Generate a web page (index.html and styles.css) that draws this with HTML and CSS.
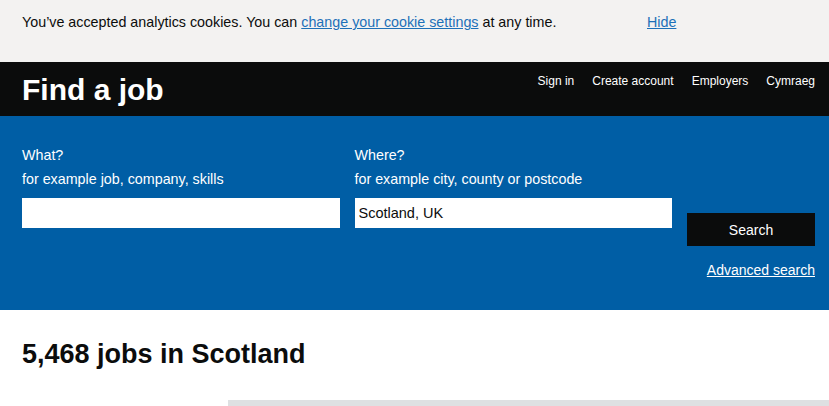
FILE: index.html
```html
<!DOCTYPE html>
<html lang="en">
<head>
  <meta charset="UTF-8" />
  <meta name="viewport" content="width=device-width, initial-scale=1.0" />
  <title>Find a job</title>
  <link rel="stylesheet" href="styles.css">
</head>
<body>
  <div class="cookie-banner">
    <p class="cookie-msg">You’ve accepted analytics cookies. You can <a href="#">change your cookie settings</a> at any time.</p>
    <a class="cookie-hide" href="#">Hide</a>
  </div>

  <header class="site-header">
    <a class="site-title" href="#">Find a job</a>
    <nav class="site-nav">
      <a href="#">Sign in</a>
      <a href="#">Create account</a>
      <a href="#">Employers</a>
      <a href="#">Cymraeg</a>
    </nav>
  </header>

  <form class="search-panel">
    <div class="field">
      <label class="field-label" for="what">What?</label>
      <span class="field-hint">for example job, company, skills</span>
      <input class="field-input" id="what" type="text" value="">
    </div>
    <div class="field">
      <label class="field-label" for="where">Where?</label>
      <span class="field-hint">for example city, county or postcode</span>
      <input class="field-input" id="where" type="text" value="Scotland, UK">
    </div>
    <div class="search-actions">
      <button class="search-btn" type="button">Search</button>
      <a class="advanced-link" href="#">Advanced search</a>
    </div>
  </form>

  <main class="results">
    <h1 class="results-title">5,468 jobs in Scotland</h1>
    <div class="results-body">
      <aside class="filters"></aside>
      <div class="results-list"></div>
    </div>
  </main>
</body>
</html>
```

FILE: styles.css
```css
body {
  margin: 0;
  font-family: "Liberation Sans", Arial, sans-serif;
  color: #0b0c0c;
  background: #fff;
  overflow: hidden;
}

a {
  color: #1d70b8;
}

/* cookie banner */
.cookie-banner {
  display: grid;
  grid-template-columns: 625px auto;
  align-items: start;
  height: 62px;
  box-sizing: border-box;
  padding: 12px 14px 0 22px;
  background: #f3f2f1;
  font-size: 14.3px;
  line-height: 20px;
}

.cookie-msg {
  margin: 0;
}

/* header */
.site-header {
  display: flex;
  justify-content: space-between;
  align-items: flex-start;
  height: 54px;
  box-sizing: border-box;
  padding: 0 14px 0 22px;
  background: #0b0c0c;
}

.site-title {
  color: #fff;
  text-decoration: none;
  font-weight: bold;
  font-size: 30px;
  line-height: 34px;
  margin-top: 11px;
}

.site-nav {
  display: flex;
  gap: 18px;
  margin-top: 11px;
}

.site-nav a {
  color: #fff;
  text-decoration: none;
  font-size: 12px;
  line-height: 16px;
}

/* search */
.search-panel {
  display: grid;
  grid-template-columns: 1fr 1fr 128px;
  gap: 15px;
  height: 194px;
  box-sizing: border-box;
  margin: 0;
  padding: 27px 14px 0 22px;
  background: #005ea5;
  color: #fff;
}

.field {
  display: flex;
  flex-direction: column;
}

.field-label,
.field-hint {
  font-size: 14.3px;
  line-height: 24px;
}

.field-input {
  margin-top: 7px;
  height: 30px;
  box-sizing: border-box;
  border: 0;
  padding: 0 4px;
  font-family: inherit;
  font-size: 14.5px;
  color: #0b0c0c;
}

.search-actions {
  display: flex;
  flex-direction: column;
  align-items: flex-end;
  padding-top: 70px;
}

.search-btn {
  width: 128px;
  height: 33px;
  border: 0;
  background: #0b0c0c;
  color: #fff;
  font-family: inherit;
  font-size: 14px;
  cursor: pointer;
}

.advanced-link {
  margin-top: 15px;
  color: #fff;
  font-size: 14px;
  line-height: 18px;
}

/* results */
.results {
  padding: 28px 0 0 22px;
}

.results-title {
  margin: 0;
  font-size: 27px;
  line-height: 32px;
}

.results-body {
  display: grid;
  grid-template-columns: 206px 1fr;
  margin-top: 30px;
}

.results-list {
  height: 40px;
  background: #dee0e2;
}
```
